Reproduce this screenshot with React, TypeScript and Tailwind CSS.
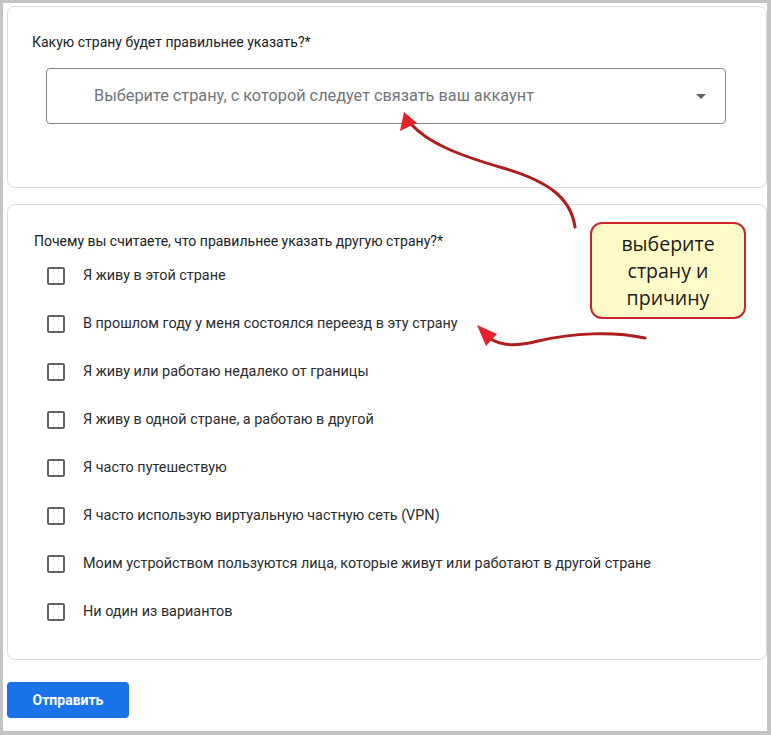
import React from "react";

const reasons = [
    "Я живу в этой стране",
    "В прошлом году у меня состоялся переезд в эту страну",
    "Я живу или работаю недалеко от границы",
    "Я живу в одной стране, а работаю в другой",
    "Я часто путешествую",
    "Я часто использую виртуальную частную сеть (VPN)",
    "Моим устройством пользуются лица, которые живут или работают в другой стране",
    "Ни один из вариантов",
];

const CheckRow: React.FC<{ label: string }> = ({ label }) => {
    return (<div className="flex items-center h-12 ml-[13px]">
        <div className="w-[18px] h-[18px] border-2 border-[#5f6368] rounded-[2px] shrink-0" />
        <div className="ml-[18px] text-[14.4px] text-[#2a2b2e]">{label}</div>
    </div>);
}

const Arrows: React.FC = () => {
    return (<svg className="absolute inset-0 pointer-events-none" width="771" height="735" viewBox="0 0 771 735">
        <path d="M572 224 C 568 195, 545 178, 500 165 C 455 152, 425 140, 408 121" fill="none" stroke="#b01c1c" strokeWidth="3" strokeLinecap="round" />
        <polygon points="401,109 397,128 414,120" fill="#e3232a" />
        <path d="M642 335 C 610 328, 570 330, 535 338 C 515 343, 500 344, 486 335" fill="none" stroke="#b01c1c" strokeWidth="3" strokeLinecap="round" />
        <polygon points="474,322 483,343 494,331" fill="#e3232a" />
    </svg>);
}

const App: React.FC = () => {
    return (
        <div className="relative w-[771px] h-[735px] bg-white border-t-[3px] border-l-[3px] border-r-4 border-b-4 border-[#c4c4c4] pt-[3px] pl-1 font-['Roboto',sans-serif] overflow-hidden">
            <div className="flex flex-col">
                <div className="h-[182px] border border-[#dadce0] rounded-lg pl-6 pt-[25px]">
                    <div className="text-[14px] leading-5 text-[#202124]">Какую страну будет правильнее указать?*</div>
                    <div className="mt-4 ml-[14px] w-[680px] h-[56px] border border-[#80868b] rounded flex items-center pl-[47px] pr-[19px]">
                        <div className="flex-1 text-[16.3px] text-[#70757a]">Выберите страну, с которой следует связать ваш аккаунт</div>
                        <div className="w-0 h-0 border-l-[5px] border-r-[5px] border-t-[5px] border-l-transparent border-r-transparent border-t-[#5f6368]" />
                    </div>
                </div>

                <div className="mt-4 h-[456px] border border-[#dadce0] rounded-lg pl-[26px] pt-[26px]">
                    <div className="text-[14px] leading-5 text-[#202124]">Почему вы считаете, что правильнее указать другую страну?*</div>
                    <div className="flex flex-col mt-[1px]">
                        {reasons.map((r) => <CheckRow key={r} label={r} />)}
                    </div>
                </div>

                <div className="mt-[22px]">
                    <button className="w-[122px] h-9 bg-[#1a73e8] rounded text-white text-[14px] font-bold">Отправить</button>
                </div>
            </div>

            <div className="absolute left-[587px] top-[219px] w-[156px] h-[97px] bg-[#fefbc9] border-2 border-[#c8262b] rounded-xl flex flex-col items-center justify-center font-['Open_Sans',sans-serif] text-[19.5px] leading-[27px] text-[#1a1a1a]">
                <div>выберите</div>
                <div>страну и</div>
                <div>причину</div>
            </div>

            <Arrows />
        </div>
    );
};

export default App;
